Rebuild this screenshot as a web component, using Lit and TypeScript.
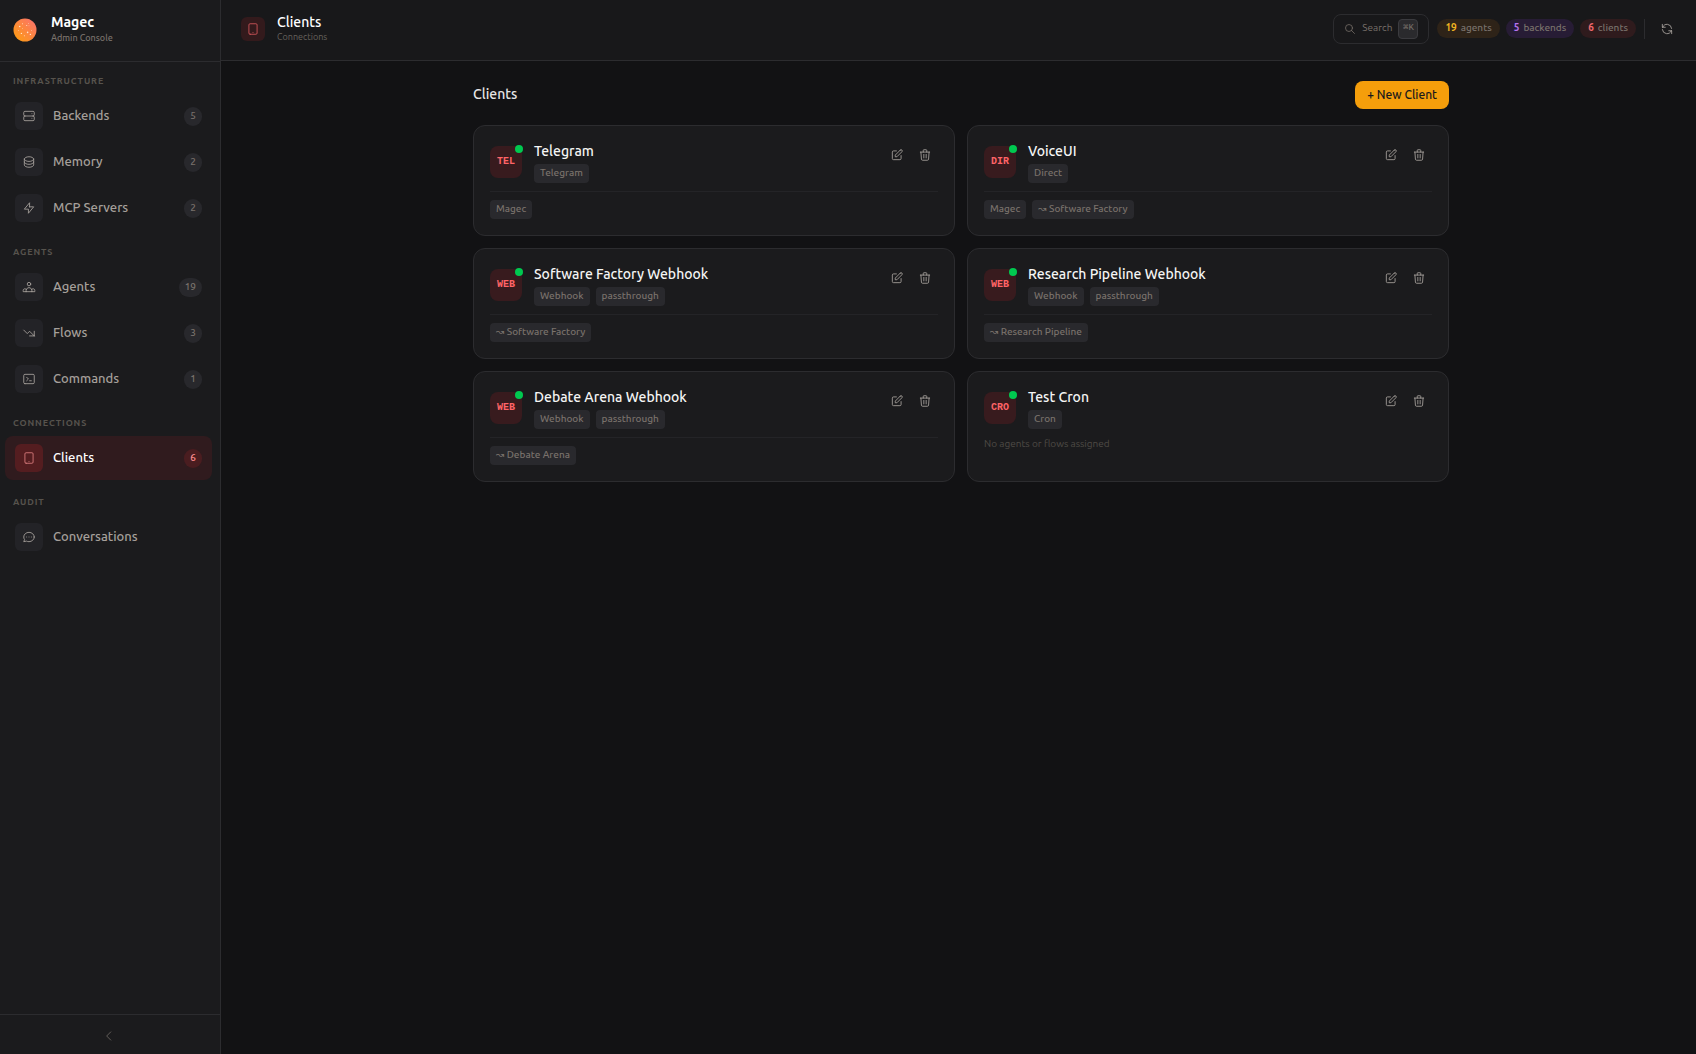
import { LitElement, html, css, svg, nothing } from "lit";
import { customElement, property } from "lit/decorators.js";
import { classMap } from "lit/directives/class-map.js";

const ICONS: Record<string, string> = {
  server:
    "M5 12h14M5 12a2 2 0 01-2-2V6a2 2 0 012-2h14a2 2 0 012 2v4a2 2 0 01-2 2M5 12a2 2 0 00-2 2v4a2 2 0 002 2h14a2 2 0 002-2v-4a2 2 0 00-2-2m-2-4h.01M17 16h.01",
  database:
    "M4 7v10c0 2.21 3.582 4 8 4s8-1.79 8-4V7M4 7c0 2.21 3.582 4 8 4s8-1.79 8-4M4 7c0-2.21 3.582-4 8-4s8 1.79 8 4m0 5c0 2.21-3.582 4-8 4s-8-1.79-8-4",
  bolt: "M13 10V3L4 14h7v7l9-11h-7z",
  users:
    "M17 20h5v-2a3 3 0 00-5.356-1.857M17 20H7m10 0v-2c0-.656-.126-1.283-.356-1.857M7 20H2v-2a3 3 0 015.356-1.857M7 20v-2c0-.656.126-1.283.356-1.857m0 0a5.002 5.002 0 019.288 0M15 7a3 3 0 11-6 0 3 3 0 016 0z",
  flow: "M13 17h8m0 0V9m0 8l-8-8-4 4-6-6",
  terminal:
    "M8 9l3 3-3 3m5 0h3M5 20h14a2 2 0 002-2V6a2 2 0 00-2-2H5a2 2 0 00-2 2v12a2 2 0 002 2z",
  tablet:
    "M12 18h.01M7 21h10a2 2 0 002-2V5a2 2 0 00-2-2H7a2 2 0 00-2 2v14a2 2 0 002 2z",
  chat: "M8 12h.01M12 12h.01M16 12h.01M21 12c0 4.418-4.03 8-9 8a9.863 9.863 0 01-4.255-.949L3 20l1.395-3.72C3.512 15.042 3 13.574 3 12c0-4.418 4.03-8 9-8s9 3.582 9 8z",
  search: "M21 21l-6-6m2-5a7 7 0 11-14 0 7 7 0 0114 0z",
  refresh:
    "M4 4v5h.582m15.356 2A8.001 8.001 0 004.582 9m0 0H9m11 11v-5h-.581m0 0a8.003 8.003 0 01-15.357-2m15.357 2H15",
  edit: "M11 5H6a2 2 0 00-2 2v11a2 2 0 002 2h11a2 2 0 002-2v-5m-1.414-9.414a2 2 0 112.828 2.828L11.828 15H9v-2.828l8.586-8.586z",
  trash:
    "M19 7l-.867 12.142A2 2 0 0116.138 21H7.862a2 2 0 01-1.995-1.858L5 7m5 4v6m4-6v6m1-10V4a1 1 0 00-1-1h-4a1 1 0 00-1 1v3M4 7h16",
  chevron: "M15 19l-7-7 7-7",
};

const icon = (name: string, size = 14) => html`<svg
  width=${size}
  height=${size}
  viewBox="0 0 24 24"
  fill="none"
  stroke="currentColor"
  stroke-width="1.5"
  stroke-linecap="round"
  stroke-linejoin="round"
  aria-hidden="true"
>
  ${svg`<path d=${ICONS[name]}></path>`}
</svg>`;

const shared = css`
  *,
  *::before,
  *::after {
    box-sizing: border-box;
  }
  h1,
  h2,
  h3,
  p,
  ul {
    margin: 0;
    padding: 0;
    font: inherit;
  }
  ul {
    list-style: none;
  }
  svg {
    display: block;
    flex: none;
  }
  button {
    font: inherit;
    color: inherit;
    background: none;
    border: 0;
    padding: 0;
    cursor: pointer;
  }
  a {
    color: inherit;
    text-decoration: none;
  }
`;

interface NavEntry {
  label: string;
  icon: string;
  count?: number;
  active?: boolean;
}

const NAV: { title: string; items: NavEntry[] }[] = [
  {
    title: "Infrastructure",
    items: [
      { label: "Backends", icon: "server", count: 5 },
      { label: "Memory", icon: "database", count: 2 },
      { label: "MCP Servers", icon: "bolt", count: 2 },
    ],
  },
  {
    title: "Agents",
    items: [
      { label: "Agents", icon: "users", count: 19 },
      { label: "Flows", icon: "flow", count: 3 },
      { label: "Commands", icon: "terminal", count: 1 },
    ],
  },
  {
    title: "Connections",
    items: [{ label: "Clients", icon: "tablet", count: 6, active: true }],
  },
  { title: "Audit", items: [{ label: "Conversations", icon: "chat" }] },
];

interface Client {
  name: string;
  code: string;
  tags: string[];
  targets: string[];
}

const CLIENTS: Client[] = [
  { name: "Telegram", code: "TEL", tags: ["Telegram"], targets: ["Magec"] },
  { name: "VoiceUI", code: "DIR", tags: ["Direct"], targets: ["Magec", "↝ Software Factory"] },
  { name: "Software Factory Webhook", code: "WEB", tags: ["Webhook", "passthrough"], targets: ["↝ Software Factory"] },
  { name: "Research Pipeline Webhook", code: "WEB", tags: ["Webhook", "passthrough"], targets: ["↝ Research Pipeline"] },
  { name: "Debate Arena Webhook", code: "WEB", tags: ["Webhook", "passthrough"], targets: ["↝ Debate Arena"] },
  { name: "Test Cron", code: "CRO", tags: ["Cron"], targets: [] },
];

@customElement("app-sidebar")
export class AppSidebar extends LitElement {
  static styles = [
    shared,
    css`
      :host {
        display: flex;
        flex-direction: column;
        width: 221px;
        flex: none;
        background: #1b1b1d;
        border-right: 1px solid #2c2c2f;
      }
      .brand {
        display: flex;
        align-items: center;
        gap: 14px;
        height: 62px;
        padding: 0 13px 1px;
        border-bottom: 1px solid #2c2c2f;
      }
      .brand-name {
        font-size: 14px;
        line-height: 16px;
        font-weight: 600;
        color: #fff;
      }
      .brand-sub {
        font-size: 9px;
        line-height: 16px;
        font-weight: 500;
        color: #79716b;
      }
      nav {
        flex: 1;
        display: flex;
        flex-direction: column;
        gap: 15px;
        padding: 12px 8px 12px 5px;
      }
      .title {
        padding-left: 8px;
        margin-bottom: 6px;
        font-size: 9px;
        line-height: 14px;
        font-weight: 600;
        letter-spacing: 0.1em;
        text-transform: uppercase;
        color: #57534d;
      }
      .items {
        display: flex;
        flex-direction: column;
        gap: 2px;
      }
      .item {
        display: flex;
        align-items: center;
        gap: 10px;
        height: 44px;
        padding: 0 10px;
        border-radius: 8px;
        font-size: 13px;
        font-weight: 500;
        color: #a6a09b;
      }
      .box {
        display: grid;
        place-items: center;
        width: 28px;
        height: 28px;
        border-radius: 6px;
        background: #232327;
      }
      .label {
        flex: 1;
        padding-bottom: 2px;
      }
      .count {
        min-width: 18px;
        padding: 1px 6px 3px;
        border-radius: 10px;
        background: #28282c;
        color: #79716b;
        font-size: 10px;
        line-height: 15px;
        text-align: center;
      }
      .active {
        background: #301b1e;
        color: #fff;
      }
      .active .box {
        background: #541d20;
        color: #d97b7d;
      }
      .active .count {
        background: #4a1d20;
        color: #ff8d8f;
      }
      .collapse {
        display: grid;
        place-items: center;
        height: 40px;
        padding: 2px 2px 0 0;
        border-top: 1px solid #2c2c2f;
        color: #6b6661;
      }
    `,
  ];

  render() {
    return html`
      <div class="brand">
        <svg width="24" height="24" viewBox="0 0 24 24" aria-hidden="true">
          <defs>
            <linearGradient id="sun" x1="0" y1="1" x2="1" y2="0">
              <stop offset="0.1" stop-color="#fd9a14"></stop>
              <stop offset="0.9" stop-color="#fb7468"></stop>
            </linearGradient>
          </defs>
          <circle cx="12" cy="12" r="11.5" fill="url(#sun)"></circle>
          <g fill="#ffe3c8">
            <circle cx="6.7" cy="8.5" r=".8"></circle>
            <circle cx="9.5" cy="5.7" r=".5"></circle>
            <circle cx="13.7" cy="7.5" r=".6"></circle>
            <circle cx="15.5" cy="5.5" r=".4"></circle>
            <circle cx="9.5" cy="10.5" r=".4"></circle>
            <circle cx="5.5" cy="12.5" r=".4"></circle>
            <circle cx="8.4" cy="15.4" r=".7"></circle>
            <circle cx="14.6" cy="14.4" r=".8"></circle>
            <circle cx="18.5" cy="12.5" r=".4"></circle>
            <circle cx="11.4" cy="17.8" r=".5"></circle>
            <circle cx="17.4" cy="16.4" r=".7"></circle>
            <circle cx="16" cy="7.8" r=".4"></circle>
          </g>
        </svg>
        <div>
          <div class="brand-name">Magec</div>
          <div class="brand-sub">Admin Console</div>
        </div>
      </div>
      <nav aria-label="Main">
        ${NAV.map(
          (group) => html`<section>
            <h2 class="title">${group.title}</h2>
            <ul class="items">
              ${group.items.map(
                (item) => html`<li>
                  <a
                    href="#"
                    class=${classMap({ item: true, active: !!item.active })}
                    aria-current=${item.active ? "page" : nothing}
                  >
                    <span class="box">${icon(item.icon)}</span>
                    <span class="label">${item.label}</span>
                    ${item.count === undefined
                      ? nothing
                      : html`<span class="count">${item.count}</span>`}
                  </a>
                </li>`,
              )}
            </ul>
          </section>`,
        )}
      </nav>
      <button class="collapse" aria-label="Collapse sidebar">${icon("chevron")}</button>
    `;
  }
}

@customElement("app-topbar")
export class AppTopbar extends LitElement {
  static styles = [
    shared,
    css`
      :host {
        display: flex;
        align-items: center;
        gap: 8px;
        height: 61px;
        padding: 0 15px 2px 20px;
        flex: none;
        background: #18181a;
        border-bottom: 1px solid #2c2c2f;
      }
      .box {
        display: grid;
        place-items: center;
        width: 24px;
        height: 24px;
        border-radius: 6px;
        background: #331a1c;
        color: #d0565a;
      }
      .heading {
        flex: 1;
        padding-left: 4px;
      }
      .name {
        font-size: 14px;
        line-height: 16px;
        font-weight: 500;
        color: #fff;
      }
      .sub {
        font-size: 9px;
        line-height: 14px;
        color: #67625d;
      }
      .search {
        display: flex;
        align-items: center;
        gap: 6px;
        height: 30px;
        padding: 0 10px;
        border: 1px solid #2c2c2f;
        border-radius: 8px;
        font-size: 10px;
        line-height: 16px;
        color: #79716b;
      }
      .search span {
        padding-bottom: 2px;
      }
      kbd {
        display: grid;
        place-items: center;
        width: 20px;
        height: 20px;
        padding-bottom: 2px;
        border: 1px solid #3b3b3f;
        border-radius: 4px;
        background: #2a2a2d;
        font: 9px/12px "Liberation Mono", monospace;
      }
      .stats {
        display: flex;
        gap: 6px;
        padding-bottom: 1px;
      }
      .stat {
        display: flex;
        gap: 4px;
        padding: 1px 8px 3px;
        border-radius: 10px;
        font-size: 10px;
        font-weight: 500;
        line-height: 15px;
        color: #79716b;
      }
      .stat b {
        font-weight: 600;
      }
      .amber {
        background: #2e2318;
      }
      .amber b {
        color: #f0b321;
      }
      .purple {
        background: #271c35;
      }
      .purple b {
        color: #b673ef;
      }
      .red {
        background: #2f1b1d;
      }
      .red b {
        color: #ef686c;
      }
      .rule {
        width: 1px;
        height: 20px;
        background: #2c2c2f;
      }
      .refresh {
        display: grid;
        place-items: center;
        width: 28px;
        height: 28px;
        color: #a6a09b;
      }
    `,
  ];

  render() {
    return html`
      <span class="box">${icon("tablet")}</span>
      <div class="heading">
        <h1 class="name">Clients</h1>
        <div class="sub">Connections</div>
      </div>
      <button class="search">${icon("search", 12)}<span>Search</span><kbd>⌘K</kbd></button>
      <div class="stats">
        <span class="stat amber"><b>19</b> agents</span>
        <span class="stat purple"><b>5</b> backends</span>
        <span class="stat red"><b>6</b> clients</span>
      </div>
      <span class="rule"></span>
      <button class="refresh" aria-label="Refresh">${icon("refresh")}</button>
    `;
  }
}

@customElement("client-card")
export class ClientCard extends LitElement {
  @property({ attribute: false }) client!: Client;

  static styles = [
    shared,
    css`
      :host {
        display: block;
        padding: 16px;
        background: #1b1b1d;
        border: 1px solid #2c2c2f;
        border-radius: 12px;
      }
      .head {
        display: flex;
        align-items: center;
        gap: 12px;
      }
      .badge {
        position: relative;
        display: grid;
        place-items: center;
        width: 32px;
        height: 32px;
        margin-bottom: 1px;
        border-radius: 8px;
        background: #381b1e;
        color: #ff6467;
        font: bold 10px/16px "Liberation Mono", monospace;
      }
      .dot {
        position: absolute;
        top: -1px;
        right: -1px;
        width: 8px;
        height: 8px;
        border-radius: 50%;
        background: #00c950;
      }
      .info {
        flex: 1;
        min-width: 0;
      }
      .name {
        font-size: 14px;
        line-height: 18px;
        font-weight: 500;
        color: #f5f5f4;
      }
      .chips {
        display: flex;
        flex-wrap: wrap;
        gap: 6px;
      }
      .info .chips {
        margin-top: 4px;
      }
      .chip {
        padding: 1px 6px 3px;
        border-radius: 4px;
        background: #29292d;
        color: #79716b;
        font-size: 10px;
        font-weight: 500;
        line-height: 15px;
      }
      .actions {
        display: flex;
        gap: 2px;
        align-self: flex-start;
        color: #a6a09b;
      }
      .actions button {
        display: grid;
        place-items: center;
        width: 26px;
        height: 26px;
      }
      .targets {
        margin-top: 8px;
        padding-top: 8px;
        border-top: 1px solid #242427;
      }
      .empty {
        margin-top: 8px;
        font-size: 10px;
        line-height: 14px;
        color: #4f4b46;
      }
    `,
  ];

  render() {
    const c = this.client;
    const chips = (list: string[]) => list.map((t) => html`<li class="chip">${t}</li>`);
    return html`
      <div class="head">
        <span class="badge">${c.code}<span class="dot"></span></span>
        <div class="info">
          <h3 class="name">${c.name}</h3>
          <ul class="chips">
            ${chips(c.tags)}
          </ul>
        </div>
        <div class="actions">
          <button aria-label="Edit ${c.name}">${icon("edit")}</button>
          <button aria-label="Delete ${c.name}">${icon("trash")}</button>
        </div>
      </div>
      ${c.targets.length
        ? html`<ul class="chips targets">
            ${chips(c.targets)}
          </ul>`
        : html`<p class="empty">No agents or flows assigned</p>`}
    `;
  }
}

@customElement("app-root")
export class AppRoot extends LitElement {
  static styles = [
    shared,
    css`
      :host {
        display: flex;
        min-height: 100vh;
        background: #121214;
        color: #e7e5e4;
        font-family: Ubuntu, "DejaVu Sans", sans-serif;
        font-size: 13px;
        line-height: 18px;
      }
      .page {
        flex: 1;
        min-width: 0;
        display: flex;
        flex-direction: column;
      }
      main {
        padding: 20px 19px 20px 24px;
      }
      .content {
        max-width: 976px;
        margin: 0 auto;
      }
      .bar {
        display: flex;
        align-items: center;
        justify-content: space-between;
        margin-bottom: 16px;
      }
      .bar-title {
        padding-bottom: 2px;
        font-size: 14px;
        font-weight: 500;
      }
      .new {
        height: 28px;
        padding: 0 12px;
        border-radius: 8px;
        background: #f59e0b;
        color: #18181b;
        font-size: 12px;
        font-weight: 500;
      }
      .grid {
        display: grid;
        grid-template-columns: repeat(2, minmax(0, 1fr));
        gap: 12px;
      }
    `,
  ];

  render() {
    return html`
      <app-sidebar></app-sidebar>
      <div class="page">
        <app-topbar></app-topbar>
        <main>
          <div class="content">
            <div class="bar">
              <h2 class="bar-title">Clients</h2>
              <button class="new">+ New Client</button>
            </div>
            <div class="grid">
              ${CLIENTS.map((c) => html`<client-card .client=${c}></client-card>`)}
            </div>
          </div>
        </main>
      </div>
    `;
  }
}
